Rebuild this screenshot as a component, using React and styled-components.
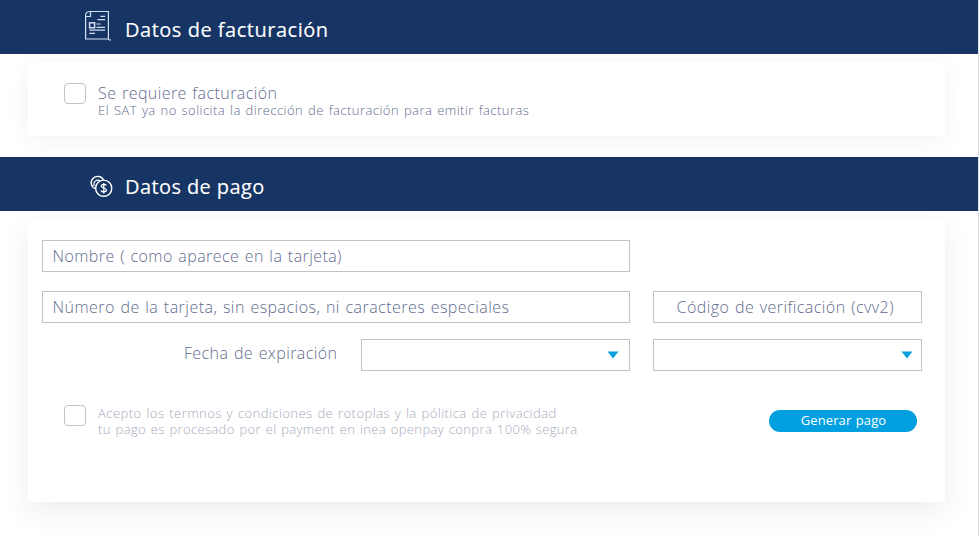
import React from "react";
import styled, { createGlobalStyle } from "styled-components";

const GlobalStyle = createGlobalStyle`
  * { box-sizing: border-box; }
  body { margin: 0; background: #fff; overflow: hidden; }
`;

const Page = styled.main`
  width: 979px;
  height: 537px;
  overflow: hidden;
  border-right: 1px solid #dcdddf;
  font-family: "Open Sans", "Noto Sans", sans-serif;
  font-weight: 300;
  color: #5f6d8e;
  background: #fff;
`;

const Banner = styled.header`
  position: relative;
  z-index: 1;
  height: 54px;
  padding: 0 0 0 83px;
  display: flex;
  align-items: flex-start;
  background: #173564;
  color: #fff;
`;

const IconSlot = styled.span`
  width: 42px;
  padding-top: ${(p) => p.$top}px;
  flex: none;
  svg { display: block; }
`;

const Title = styled.h2`
  margin: 16.5px 0 0;
  font-size: 20px;
  line-height: 26px;
  font-weight: 400;
  -webkit-text-stroke: 0.12px #fff;
  letter-spacing: ${(p) => p.$spacing}px;
  white-space: nowrap;
`;

const Section = styled.section`
  height: ${(p) => p.$height}px;
  padding: ${(p) => p.$top}px 33px 0 28px;
`;

const Card = styled.div`
  height: ${(p) => p.$height}px;
  background: #fff;
  box-shadow: ${(p) => p.$shadow};
`;

const CheckRow = styled.label`
  display: flex;
  align-items: flex-start;
  gap: 12px;
`;

const Checkbox = styled.input`
  appearance: none;
  width: 22.5px;
  height: 21px;
  margin: 0;
  flex: none;
  border: 1px solid #c2c3c6;
  border-radius: 4px;
  background: #fff;
`;

const BillingRow = styled(CheckRow)`
  padding: 21px 0 0 35.6px;
`;

const Lines = styled.span`
  display: flex;
  flex-direction: column;
`;

const Text = styled.span`
  font-size: ${(p) => p.$size}px;
  line-height: ${(p) => p.$line}px;
  letter-spacing: ${(p) => p.$spacing}px;
  word-spacing: 1px;
  white-space: nowrap;
`;

const Form = styled.form`
  display: grid;
  grid-template-columns: 296px 269px 269px;
  grid-template-rows: 32px 19px 32px 16px 32px;
  column-gap: 23px;
  padding: 20px 0 0 14px;
`;

const Field = styled.div`
  grid-column: ${(p) => p.$column};
  grid-row: ${(p) => p.$row};
  display: flex;
  align-items: center;
  justify-content: ${(p) => p.$align || "flex-start"};
  padding: 0 ${(p) => p.$end ?? 10}px 0 9.5px;
  border: 1px solid #c1c3c6;
  background: #fff;
`;

const FieldLabel = styled.div`
  grid-column: 1;
  grid-row: 5;
  display: flex;
  justify-content: flex-end;
  padding: 3px 0.5px 0 0;
`;

const Arrow = styled.svg`
  width: 12px;
  height: 8px;
`;

const Footer = styled.div`
  display: flex;
  align-items: flex-start;
  justify-content: space-between;
  padding: 34px 28px 0 35.6px;
`;

const Terms = styled(CheckRow)`
  color: #a5abbd;
`;

const PayButton = styled.button`
  width: 148px;
  height: 21.5px;
  margin: 5px 0 0;
  padding: 0 0 1px 1px;
  border: 0;
  border-radius: 11px;
  background: #009fe0;
  color: #fff;
  font: 400 13px/19px "Open Sans", sans-serif;
  letter-spacing: 0.1px;
  word-spacing: 1px;
`;

const InvoiceIcon = () => (
  <svg width="30" height="32" viewBox="0 0 30 32" fill="none" stroke="#d3e1f3" strokeWidth="1.2">
    <path d="M6.5 1.5H25.4V28Q25.4 30.7 28 29.8M2.6 5.5V29H25.4M7.5 1.5V6.5H2.6Q2.2 1.6 6.5 1.5" />
    <path d="M17.5 6.3H22M14.5 9.6H22M13.5 14H17.5M13.5 17.3H22M6.5 20.2H22M6.5 23.3H12" />
    <rect x="6.6" y="12.8" width="5" height="5" strokeWidth="1.5" />
  </svg>
);

const CoinsIcon = () => (
  <svg width="34" height="24" viewBox="0 0 34 24" fill="none" stroke="#fff" strokeWidth="1.4">
    <circle cx="20.7" cy="13.2" r="8.1" />
    <path d="M20.5 5.1C18.8 .9 13.3.2 10.2 3.2C6.7 6.6 7.8 12.2 12.7 13.8" />
    <path d="M11.2 11.1C9.7 7 13.5 3.7 17.2 5.8" strokeWidth="1.1" />
    <path d="M23.3 10.4C22.4 9 18.3 8.9 18.3 11.1C18.3 13.4 23.4 12.6 23.4 15.1C23.4 17.4 18.9 17.4 18 15.6M20.8 7.9V18.4" strokeWidth="1.3" />
  </svg>
);

const Caret = () => (
  <Arrow viewBox="0 0 12 8" aria-hidden="true">
    <path d="M.5 .5H11.5L6 7.6Z" fill="#089fdc" />
  </Arrow>
);

export default function App() {
  return (
    <Page>
      <GlobalStyle />
      <Banner>
        <IconSlot $top={10}><InvoiceIcon /></IconSlot>
        <Title $spacing={0.52}>Datos de facturación</Title>
      </Banner>
      <Section $height={103} $top={8}>
        <Card $height={74} $shadow="0 4px 22px rgba(0,0,0,.055)">
          <BillingRow>
            <Checkbox type="checkbox" />
            <Lines>
              <Text $size={16} $line={20} $spacing={0.42}>Se requiere facturación</Text>
              <Text $size={13} $line={15} $spacing={0.46}>El SAT ya no solicita la dirección de facturación para emitir facturas</Text>
            </Lines>
          </BillingRow>
        </Card>
      </Section>
      <Banner>
        <IconSlot $top={18}><CoinsIcon /></IconSlot>
        <Title $spacing={0.4}>Datos de pago</Title>
      </Banner>
      <Section $height={326} $top={9}>
        <Card $height={282} $shadow="0 9px 28px rgba(0,0,0,.075)">
          <Form>
            <Field $column="1 / 3" $row={1}>
              <Text $size={16} $line={20} $spacing={0.42}>Nombre ( como aparece en la tarjeta)</Text>
            </Field>
            <Field $column="1 / 3" $row={3}>
              <Text $size={16} $line={20} $spacing={0.46}>Número de la tarjeta, sin espacios, ni caracteres especiales</Text>
            </Field>
            <Field $column="3" $row={3} $align="center" $end={14}>
              <Text $size={16} $line={20} $spacing={0.44}>Código de verificación (cvv2)</Text>
            </Field>
            <FieldLabel>
              <Text $size={16} $line={22} $spacing={0.42}>Fecha de expiración</Text>
            </FieldLabel>
            <Field $column="2" $row={5} $align="flex-end"><Caret /></Field>
            <Field $column="3" $row={5} $align="flex-end" $end={8}><Caret /></Field>
          </Form>
          <Footer>
            <Terms>
              <Checkbox type="checkbox" />
              <Lines>
                <Text $size={13} $line={16} $spacing={0.45}>Acepto los termnos y condiciones de rotoplas y la pólitica de privacidad</Text>
                <Text $size={13} $line={16} $spacing={0.36}>tu pago es procesado por el payment en inea openpay conpra 100% segura</Text>
              </Lines>
            </Terms>
            <PayButton type="button">Generar pago</PayButton>
          </Footer>
        </Card>
      </Section>
    </Page>
  );
}
